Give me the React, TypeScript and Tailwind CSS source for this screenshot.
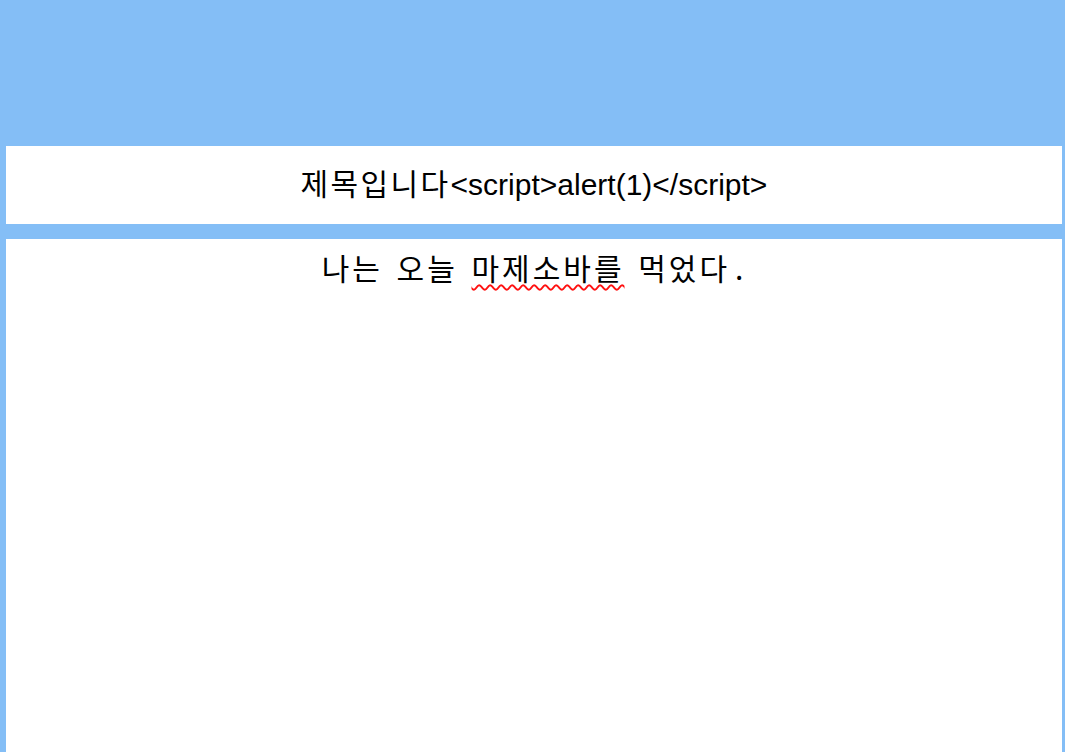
export default function App() {
  return (
    <div className="min-h-[752px] w-full bg-[#84bef6] pt-[146px] pl-[6px] pr-[3px] flex flex-col gap-[15px] overflow-hidden">
      <div className="bg-white h-[78px] flex items-center justify-center">
        <h1 className="text-[30px] leading-none text-black" style={{ fontFamily: '"Liberation Sans", "Noto Sans CJK KR", sans-serif' }}>
          <span className="tracking-[2.4px]">제목입니다</span>&lt;script&gt;alert(1)&lt;/script&gt;
        </h1>
      </div>
      <div className="bg-white h-[513px] flex justify-center pt-[10px]">
        <p className="text-[30px] leading-[36px] text-black tracking-[3px] [word-spacing:4px]" style={{ fontFamily: '"Noto Sans CJK KR", sans-serif' }}>
          나는 오늘{' '}
          <span className="underline decoration-wavy decoration-[#ff1010] decoration-[1.5px] underline-offset-[4px]">마제소바를</span>
          {' '}먹었다<span className="pl-[5px]">.</span>
        </p>
      </div>
    </div>
  );
}
